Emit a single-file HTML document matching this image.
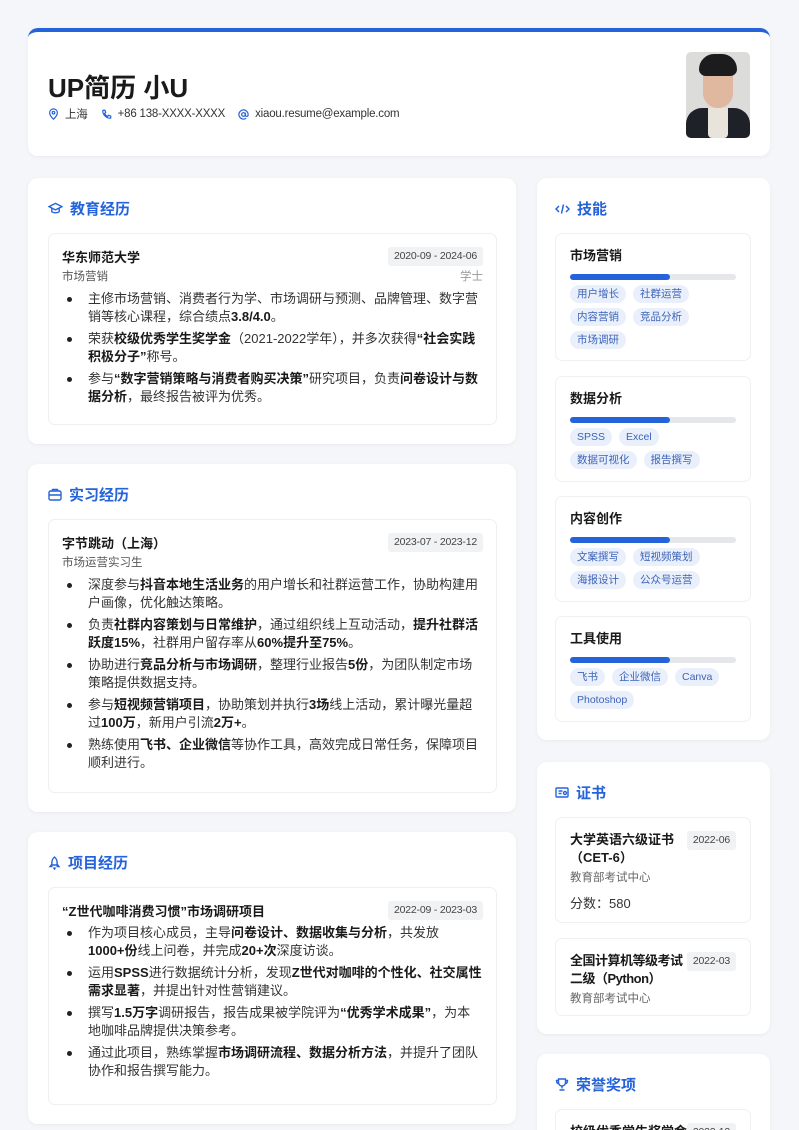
<!DOCTYPE html>
<html><head><meta charset="utf-8">
<style>
*{margin:0;padding:0;box-sizing:border-box}
html,body{width:799px;height:1130px;overflow:hidden}
body{background:#f4f6f9;font-family:"Liberation Sans","Noto Sans CJK SC",sans-serif;color:#222;position:relative}
.card{position:absolute;background:#fff;border-radius:10px;box-shadow:0 1px 4px rgba(0,0,0,.05);overflow:hidden}
.hdr{left:28px;top:28px;width:742px;height:128px;border-top:4px solid #2463d9;border-radius:10px}
.name{position:absolute;left:20px;top:36px;font-size:26px;font-weight:bold;color:#1a1a1a}
.contact{position:absolute;left:20px;top:74px;font-size:11.5px;color:#333;display:flex;align-items:center;letter-spacing:-0.2px}
.contact span{display:flex;align-items:center;margin-right:13px}
.contact svg{margin-right:6px}
.photo{position:absolute;left:658px;top:20px;width:64px;height:86px;border-radius:5px;background:#dcdcda;overflow:hidden}
.stitle{position:absolute;left:20px;top:20px;font-size:15px;font-weight:bold;color:#2463d9;display:flex;align-items:center}
.stitle svg{margin-right:7px}
.box{position:absolute;border:1px solid #eef0f3;border-radius:7px;background:#fff}
.lbox{left:20px;width:449px;padding:13px 13px 0 13px}
.row{display:flex;justify-content:space-between;align-items:center}
.t{font-size:13px;font-weight:bold;color:#1a1a1a}
.date{background:#f1f2f4;color:#444;font-size:10.5px;padding:2px 6px;border-radius:3px;line-height:15px;white-space:nowrap;letter-spacing:-0.2px}
.sub{font-size:11.5px;color:#555;margin-top:2px;display:flex;justify-content:space-between}
.sub i{font-style:normal;color:#999}
ul{margin-top:6px;list-style:none;font-size:13px;line-height:17.5px;color:#333}
li{margin-bottom:5px;padding-left:26px;position:relative}
li::before{content:"";position:absolute;left:5px;top:7px;width:5px;height:5px;border-radius:50%;background:#222}
b{color:#1a1a1a}
.rbox{left:18px;width:196px;padding:13px 14px 0 14px}
.bar{height:6px;background:#e6e7ea;border-radius:3px;margin:9px 0 5px}
.bar div{width:60%;height:100%;background:#2463d9;border-radius:3px}
.tags{display:flex;flex-wrap:wrap}
.tag{font-size:10.5px;color:#3d64b8;background:#e9effb;border-radius:9px;padding:0 7px;line-height:18px;margin:0 7px 5px 0}
.ct{font-size:13px;font-weight:bold;line-height:18px;color:#1a1a1a}
.cdate{position:absolute;right:14px;top:13px}
</style></head><body>

<div class="card hdr">
 <div class="name">UP简历 小U</div>
 <div class="contact">
  <span><svg width="11" height="12" viewBox="0 0 12 14" fill="none" stroke="#2463d9" stroke-width="1.4"><path d="M6 13s4.5-4.2 4.5-7.5a4.5 4.5 0 0 0-9 0C1.5 8.8 6 13 6 13z"/><circle cx="6" cy="5.5" r="1.5"/></svg>上海</span>
  <span><svg width="11" height="11" viewBox="0 0 12 12" fill="none" stroke="#2463d9" stroke-width="1.3"><path d="M2 1.5l2.2-.2 1 2.5-1.3 1a6 6 0 0 0 3.3 3.3l1-1.3 2.5 1-.2 2.2C6 10.5 1.5 6 2 1.5z"/></svg>+86 138-XXXX-XXXX</span>
  <span><svg width="11" height="11" viewBox="0 0 12 12" fill="none" stroke="#2463d9" stroke-width="1.3"><circle cx="6" cy="6" r="2"/><path d="M8 4v2.5a1.5 1.5 0 0 0 3 0V6a5 5 0 1 0-2 4"/></svg>xiaou.resume@example.com</span>
 </div>
 <div class="photo">
  <div style="position:absolute;left:0;top:56px;width:64px;height:34px;background:#1e2228;border-radius:16px 16px 0 0"></div>
  <div style="position:absolute;left:22px;top:56px;width:20px;height:30px;background:#e8e4dc;border-radius:0 0 4px 4px"></div>
  <div style="position:absolute;left:17px;top:12px;width:30px;height:44px;background:#e0b79f;border-radius:14px 14px 15px 15px"></div>
  <div style="position:absolute;left:13px;top:2px;width:38px;height:22px;background:#1c1c1e;border-radius:18px 18px 8px 8px"></div>
 </div>
</div>

<!-- Education -->
<div class="card" style="left:28px;top:178px;width:488px;height:266px">
 <div class="stitle"><svg width="15" height="13" viewBox="0 0 16 14" fill="none" stroke="#2463d9" stroke-width="1.5"><path d="M1 5l7-3.5L15 5 8 8.5z"/><path d="M4 7v3.5c2 1.5 6 1.5 8 0V7"/></svg>教育经历</div>
 <div class="box lbox" style="top:55px;height:192px">
  <div class="row"><span class="t">华东师范大学</span><span class="date">2020-09 - 2024-06</span></div>
  <div class="sub"><span>市场营销</span><i>学士</i></div>
  <ul>
   <li>主修市场营销、消费者行为学、市场调研与预测、品牌管理、数字营销等核心课程，综合绩点<b>3.8/4.0</b>。</li>
   <li>荣获<b>校级优秀学生奖学金</b>（2021-2022学年），并多次获得<b>“社会实践积极分子”</b>称号。</li>
   <li>参与<b>“数字营销策略与消费者购买决策”</b>研究项目，负责<b>问卷设计与数据分析</b>，最终报告被评为优秀。</li>
  </ul>
 </div>
</div>

<!-- Internship -->
<div class="card" style="left:28px;top:464px;width:488px;height:348px">
 <div class="stitle"><svg width="14" height="13" viewBox="0 0 14 13" fill="none" stroke="#2463d9" stroke-width="1.4"><rect x="1" y="3" width="12" height="9" rx="1.5"/><path d="M4.5 3V1.5h5V3M1 7h12"/></svg>实习经历</div>
 <div class="box lbox" style="top:55px;height:274px">
  <div class="row"><span class="t">字节跳动（上海）</span><span class="date">2023-07 - 2023-12</span></div>
  <div class="sub"><span>市场运营实习生</span></div>
  <ul>
   <li>深度参与<b>抖音本地生活业务</b>的用户增长和社群运营工作，协助构建用户画像，优化触达策略。</li>
   <li>负责<b>社群内容策划与日常维护</b>，通过组织线上互动活动，<b>提升社群活跃度15%</b>，社群用户留存率从<b>60%提升至75%</b>。</li>
   <li>协助进行<b>竞品分析与市场调研</b>，整理行业报告<b>5份</b>，为团队制定市场策略提供数据支持。</li>
   <li>参与<b>短视频营销项目</b>，协助策划并执行<b>3场</b>线上活动，累计曝光量超过<b>100万</b>，新用户引流<b>2万+</b>。</li>
   <li>熟练使用<b>飞书、企业微信</b>等协作工具，高效完成日常任务，保障项目顺利进行。</li>
  </ul>
 </div>
</div>

<!-- Project -->
<div class="card" style="left:28px;top:832px;width:488px;height:292px">
 <div class="stitle"><svg width="13" height="14" viewBox="0 0 13 14" fill="none" stroke="#2463d9" stroke-width="1.4"><path d="M6.5 1c2.5 2 3 5 2.5 8h-5C3.5 6 4 3 6.5 1z"/><path d="M4 8l-2 2.5h2.5M9 8l2 2.5H8.5M5.5 11.5l1 1.5 1-1.5"/></svg>项目经历</div>
 <div class="box lbox" style="top:55px;height:218px">
  <div class="row"><span class="t">“Z世代咖啡消费习惯”市场调研项目</span><span class="date">2022-09 - 2023-03</span></div>
  <ul style="margin-top:4px">
   <li>作为项目核心成员，主导<b>问卷设计、数据收集与分析</b>，共发放<b>1000+份</b>线上问卷，并完成<b>20+次</b>深度访谈。</li>
   <li>运用<b>SPSS</b>进行数据统计分析，发现<b>Z世代对咖啡的个性化、社交属性需求显著</b>，并提出针对性营销建议。</li>
   <li>撰写<b>1.5万字</b>调研报告，报告成果被学院评为<b>“优秀学术成果”</b>，为本地咖啡品牌提供决策参考。</li>
   <li>通过此项目，熟练掌握<b>市场调研流程、数据分析方法</b>，并提升了团队协作和报告撰写能力。</li>
  </ul>
 </div>
</div>

<!-- Skills -->
<div class="card" style="left:537px;top:178px;width:233px;height:562px">
 <div class="stitle" style="left:18px"><svg width="15" height="12" viewBox="0 0 15 12" fill="none" stroke="#2463d9" stroke-width="1.5"><path d="M4 3L1 6l3 3M11 3l3 3-3 3M8.5 1.5l-2 9"/></svg>技能</div>
 <div class="box rbox" style="top:55px;height:128px">
  <div class="ct">市场营销</div><div class="bar"><div></div></div>
  <div class="tags"><span class="tag">用户增长</span><span class="tag">社群运营</span><span class="tag">内容营销</span><span class="tag">竞品分析</span><span class="tag">市场调研</span></div>
 </div>
 <div class="box rbox" style="top:198px;height:106px">
  <div class="ct">数据分析</div><div class="bar"><div></div></div>
  <div class="tags"><span class="tag">SPSS</span><span class="tag">Excel</span><span class="tag">数据可视化</span><span class="tag">报告撰写</span></div>
 </div>
 <div class="box rbox" style="top:318px;height:106px">
  <div class="ct">内容创作</div><div class="bar"><div></div></div>
  <div class="tags"><span class="tag">文案撰写</span><span class="tag">短视频策划</span><span class="tag">海报设计</span><span class="tag">公众号运营</span></div>
 </div>
 <div class="box rbox" style="top:438px;height:106px">
  <div class="ct">工具使用</div><div class="bar"><div></div></div>
  <div class="tags"><span class="tag">飞书</span><span class="tag">企业微信</span><span class="tag">Canva</span><span class="tag">Photoshop</span></div>
 </div>
</div>

<!-- Certificates -->
<div class="card" style="left:537px;top:762px;width:233px;height:272px">
 <div class="stitle" style="left:18px"><svg width="14" height="12" viewBox="0 0 14 12" fill="none" stroke="#2463d9" stroke-width="1.4"><rect x="1" y="1" width="12" height="9" rx="1"/><path d="M3.5 4h4M3.5 6.5h3"/><circle cx="10" cy="6" r="1.5"/></svg>证书</div>
 <div class="box rbox" style="top:55px;height:106px">
  <div class="ct">大学英语六级证书<br>（CET-6）</div>
  <span class="date cdate">2022-06</span>
  <div style="font-size:11.5px;color:#666;margin-top:2px">教育部考试中心</div>
  <div style="font-size:13px;color:#333;margin-top:8px">分数：580</div>
 </div>
 <div class="box rbox" style="top:176px;height:78px">
  <div class="ct" style="white-space:nowrap;letter-spacing:-0.5px">全国计算机等级考试<br>二级（Python）</div>
  <span class="date cdate">2022-03</span>
  <div style="font-size:11.5px;color:#666;margin-top:2px">教育部考试中心</div>
 </div>
</div>

<!-- Honors -->
<div class="card" style="left:537px;top:1054px;width:233px;height:76px;border-radius:10px 10px 0 0">
 <div class="stitle" style="left:18px"><svg width="14" height="13" viewBox="0 0 14 13" fill="none" stroke="#2463d9" stroke-width="1.4"><path d="M3.5 1h7v3.5a3.5 3.5 0 0 1-7 0z"/><path d="M3.5 2.5H1.5c0 2 1 3 2.2 3M10.5 2.5h2c0 2-1 3-2.2 3M7 8v2.5M4.5 12h5"/></svg>荣誉奖项</div>
 <div class="box rbox" style="top:55px;height:40px">
  <div class="ct" style="white-space:nowrap">校级优秀学生奖学金</div>
  <span class="date cdate">2022-12</span>
 </div>
</div>

</body></html>
